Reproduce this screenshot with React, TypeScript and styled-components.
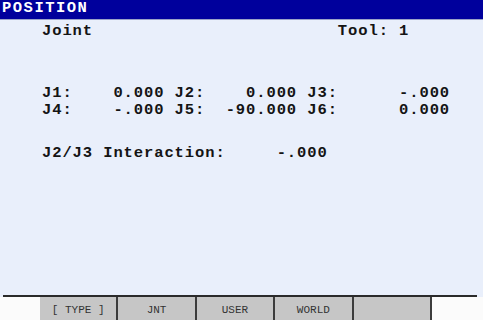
import styled, { createGlobalStyle } from "styled-components";

const GlobalStyle = createGlobalStyle`
  html, body {
    margin: 0;
    padding: 0;
    background: #ffffff;
  }
`;

const Screen = styled.div`
  display: flex;
  flex-direction: column;
  width: 483px;
  height: 320px;
  background: #e9effb;
  font-family: "Liberation Mono", "Courier New", monospace;
  overflow: hidden;
`;

const TitleBar = styled.div`
  height: 19px;
  background: #00009c;
  border-bottom: 1px solid #9aa3c8;
  color: #ffffff;
  font-weight: bold;
  font-size: 15.5px;
  letter-spacing: 1.5px;
  line-height: 17px;
  padding-left: 2px;
`;

const Body = styled.div`
  flex: 1;
  padding-left: 42px;
  color: #141414;
  font-weight: bold;
  font-size: 15.5px;
  letter-spacing: 0.9px;
`;

const Line = styled.div<{ $top: number }>`
  height: 17px;
  line-height: 17px;
  margin-top: ${(p) => p.$top}px;
  white-space: pre;
`;

const Divider = styled.div`
  height: 2px;
  margin: 0 6px 0 3px;
  background: #2a2a2a;
`;

const KeyBar = styled.div`
  display: flex;
  height: 23px;
  background: #fbfbfb;
  padding-left: 40px;
`;

const SoftKey = styled.div`
  width: 78.4px;
  height: 100%;
  box-sizing: border-box;
  padding-top: 2px;
  background: #c6c6c6;
  border-right: 2px solid #3c3c3c;
  display: flex;
  align-items: center;
  justify-content: center;
  font-size: 11px;
  color: #333333;
  white-space: pre;
`;

const rows = [
  "J1:    0.000 J2:    0.000 J3:      -.000",
  "J4:    -.000 J5:  -90.000 J6:      0.000",
];

const keys = ["[ TYPE ]", "JNT", "USER", "WORLD", ""];

export default function App() {
  return (
    <>
      <GlobalStyle />
      <Screen>
        <TitleBar>POSITION</TitleBar>
        <Body>
          <Line $top={3}>{"Joint                        Tool: 1"}</Line>
          <Line $top={45}>{rows[0]}</Line>
          <Line $top={0}>{rows[1]}</Line>
          <Line $top={26}>{"J2/J3 Interaction:     -.000"}</Line>
        </Body>
        <Divider />
        <KeyBar>
          {keys.map((k, i) => (
            <SoftKey key={i}>{k}</SoftKey>
          ))}
        </KeyBar>
      </Screen>
    </>
  );
}
